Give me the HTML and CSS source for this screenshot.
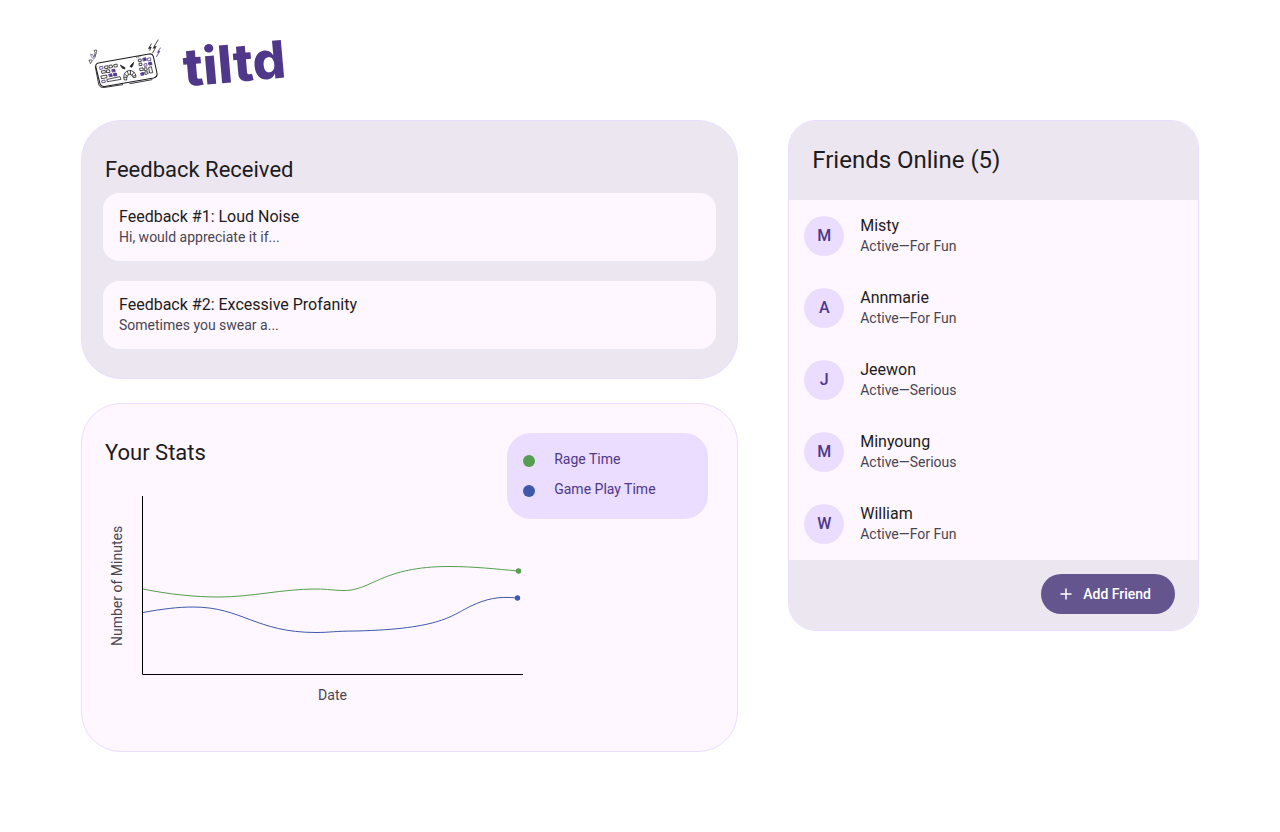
FILE: index.html
```html
<!DOCTYPE html>
<html lang="en">
<head>
<meta charset="utf-8">
<meta name="viewport" content="width=device-width, initial-scale=1">
<title>tiltd</title>
<link rel="stylesheet" href="styles.css">
</head>
<body>
<header class="site-header">
  <svg class="logo" viewBox="3 0 270 180" aria-hidden="true" fill="none" stroke="#1d1b20" stroke-width="2.4" stroke-linejoin="round" stroke-linecap="round">
    <path stroke-width="3.2" d="M55 87 L207 60 Q217 58 220 67 L231 117 Q233 129 221 132 L78 157 Q64 160 60 149 L48 101 Q45 89 55 87Z"/>
    <path stroke-width="2.6" d="M46 98 L56 151 Q60 163 75 160 L128 152 M150 149 L216 137"/>
    <path stroke-width="2" d="M28 78 l8 0 1 2 -5 8z M43 49 l6 -1 1 4 -5 18 -2 -2 2-12z"/>
    <path stroke="#4f378a" stroke-width="2" d="M33 61 l5 1 5 12 -2 2 -6-7z"/>
    <path fill="#1d1b20" stroke-width="1.4" d="M234 18 L222 38 L229 37 L217 58 L226 42 L220 43Z M214 30 l-9 14 6-1 -2 7 5-11 -5 1z"/>
    <path stroke="#4f378a" fill="#4f378a" stroke-width="1.4" d="M241 42 l-9 14 5-1 -8 14 11-18 -5 1z"/>
    <path d="M74 97l9-2 1 8-8 1z M88 94l8-1 2 7-9 2z M102 92l9-2 1 8-8 1z M65 111l10-2 2 7-10 2z M80 108l8-1 2 8-9 1z M64 126l16-3 1 8-15 3z M82 136l38-8 3 8-40 7z M176 76l7-1 1 7-7 1z M178 88l7-1 1 7-7 1z M180 103l8-2 2 8-9 1z M193 102l7-1 2 7-7 2z M195 114l8-1 1 6-7 2z M207 100l7-2 4 18-8 1z"/>
    <path stroke-dasharray="1 4" d="M170 70l10-2"/>
    <g stroke="#4f378a" fill="#4f378a">
      <path fill="none" d="M60 98l8-1 1 7-8 2z M66 140l9-2 1 7-9 1z M203 73l8-2 2 8-8 2z M193 90l7-2 1 8-7 1z"/>
      <path d="M96 107l8-2 2 7-8 2z M87 121l8-2 2 8-8 1z M101 118l8-1 2 8-9 1z M189 73l8-2 2 8-8 2z M206 86l8-2 2 8-8 1z M183 117l8-2 1 8-8 1z"/>
    </g>
    <path fill="#1d1b20" d="M122 94 l13 7 -1 4 -6-2z M160 86 l-10 11 5 3 3-5z"/>
    <path d="M132 136 Q129 118 140 112 Q155 105 165 118 Q169 125 167 130 L160 131 Q157 120 149 121 Q139 123 140 137Z M135 121l6 5 M142 112l3 9 M152 110l-1 11 M162 115l-6 8 M166 124l-7 3 M132 130l8 0"/>
  </svg>
  <h1 class="wordmark">tiltd</h1>
</header>

<main class="dashboard">
  <div class="column">
    <section class="card feedback" aria-labelledby="feedback-title">
      <h2 class="card-title" id="feedback-title">Feedback Received</h2>
      <ul class="feedback-list">
        <li class="feedback-item">
          <h3 class="item-title">Feedback #1: Loud Noise</h3>
          <p class="item-text">Hi, would appreciate it if...</p>
        </li>
        <li class="feedback-item">
          <h3 class="item-title">Feedback #2: Excessive Profanity</h3>
          <p class="item-text">Sometimes you swear a...</p>
        </li>
      </ul>
    </section>

    <section class="card stats" aria-labelledby="stats-title">
      <h2 class="card-title" id="stats-title">Your Stats</h2>
      <ul class="legend">
        <li class="legend-row"><span class="dot dot-rage"></span>Rage Time</li>
        <li class="legend-row"><span class="dot dot-play"></span>Game Play Time</li>
      </ul>
      <figure class="chart">
        <span class="axis-y">Number of Minutes</span>
        <svg class="plot" viewBox="0 0 381 179" role="img" aria-label="Rage time and game play time by date" fill="none">
          <path stroke="#000" d="M.5 0V178.500H381"/>
          <path stroke="#559e4f" d="M1 93 C28 98.500 53 101 77 101 C110 101 140 93 174 93 C186 93 192 94.500 202 94.500 C230 94.500 240 70.500 307 70.500 C332 70.500 354 73 376 75"/>
          <path stroke="#3f58aa" d="M1 116.500 C20 113 36 111 51 111 C100 111 114 136.500 174 136.500 C188 136.500 193 135 214 135 C300 133 310 119 329 110 C344 103 356 100 375 102"/>
          <circle cx="376.500" cy="75" r="2.700" fill="#559e4f"/>
          <circle cx="375.500" cy="102" r="2.700" fill="#3f58aa"/>
        </svg>
        <figcaption class="axis-x">Date</figcaption>
      </figure>
    </section>
  </div>

  <section class="friends" aria-labelledby="friends-title">
    <h2 class="friends-title" id="friends-title">Friends Online (5)</h2>
    <ul class="friend-list">
      <li class="friend"><span class="avatar" aria-hidden="true">M</span><div><h3 class="item-title">Misty</h3><p class="item-text">Active—For Fun</p></div></li>
      <li class="friend"><span class="avatar" aria-hidden="true">A</span><div><h3 class="item-title">Annmarie</h3><p class="item-text">Active—For Fun</p></div></li>
      <li class="friend"><span class="avatar" aria-hidden="true">J</span><div><h3 class="item-title">Jeewon</h3><p class="item-text">Active—Serious</p></div></li>
      <li class="friend"><span class="avatar" aria-hidden="true">M</span><div><h3 class="item-title">Minyoung</h3><p class="item-text">Active—Serious</p></div></li>
      <li class="friend"><span class="avatar" aria-hidden="true">W</span><div><h3 class="item-title">William</h3><p class="item-text">Active—For Fun</p></div></li>
    </ul>
    <div class="friends-footer">
      <button class="add-button" type="button">
        <svg class="add-icon" viewBox="0 0 18 18" aria-hidden="true"><path d="M9 3.500V14.500M3.500 9H14.500" stroke="currentColor" stroke-width="1.500"/></svg>
        Add Friend
      </button>
    </div>
  </section>
</main>
</body>
</html>
```
FILE: styles.css
```css
:root {
  --ink: #1d1b20;
  --ink-soft: #49454f;
  --surface: #fef7ff;
  --surface-high: #ece6f0;
  --lilac: #eaddff;
  --purple: #4f378a;
  --button: #65558f;
}

* {
  box-sizing: border-box;
}

body {
  margin: 0;
  padding: 34px 81px 80px;
  background: #fff;
  color: var(--ink);
  font-family: Roboto, "Liberation Sans", sans-serif;
}

h1, h2, h3, p, ul, figure {
  margin: 0;
  padding: 0;
  font-weight: 400;
}

ul {
  list-style: none;
}

.site-header {
  display: flex;
  align-items: center;
  gap: 12px;
  margin-bottom: 26px;
}

.logo {
  width: 90px;
  height: 60px;
}

.wordmark {
  color: var(--purple);
  font: 800 52px/60px Inter, sans-serif;
  transform: rotate(-5deg);
}

.dashboard {
  display: grid;
  grid-template-columns: 1.6fr 1fr;
  gap: 50px;
  align-items: start;
}

.column {
  display: grid;
  gap: 24px;
}

.card {
  border: 1px solid var(--lilac);
  border-radius: 40px;
}

.card-title {
  font-size: 22px;
  line-height: 28px;
}

.feedback {
  padding: 35px 21px 29px;
  background: var(--surface-high);
}

.feedback .card-title {
  padding: 0 2px;
}

.feedback-list {
  display: grid;
  gap: 20px;
  margin-top: 9px;
}

.feedback-item {
  padding: 14px 16px;
  border-radius: 16px;
  background: var(--surface);
}

.item-title {
  font-size: 16px;
  line-height: 20px;
}

.item-text {
  color: var(--ink-soft);
  font-size: 14px;
  line-height: 20px;
}

.stats {
  display: grid;
  grid-template-columns: 1fr auto;
  grid-template-rows: 63px auto;
  padding: 29px 29px 46px 23px;
  background: var(--surface);
}

.stats .card-title {
  padding-top: 6px;
}

.legend {
  grid-area: 1 / 2 / 3 / 3;
  align-self: start;
  display: grid;
  gap: 10px;
  width: 201px;
  padding: 16px 16px 20px;
  border-radius: 24px;
  background: var(--lilac);
  color: var(--purple);
  font-size: 14px;
  line-height: 20px;
}

.legend-row {
  display: flex;
  align-items: center;
  gap: 19px;
}

.dot {
  width: 12px;
  height: 12px;
  margin-top: 4px;
  border-radius: 50%;
}

.dot-rage {
  background: #559e4f;
}

.dot-play {
  background: #3f58aa;
}

.chart {
  grid-area: 2 / 1 / 3 / 3;
  display: grid;
  grid-template-columns: 20px minmax(0, 381px);
  gap: 10px 15px;
  padding-left: 2px;
  color: var(--ink-soft);
  font-size: 14px;
  line-height: 20px;
}

.axis-y {
  writing-mode: vertical-rl;
  transform: rotate(180deg);
  text-align: center;
}

.plot {
  width: 100%;
}

.axis-x {
  grid-column: 2;
  text-align: center;
}

.friends {
  overflow: hidden;
  border: 1px solid var(--lilac);
  border-radius: 28px;
  background: var(--surface);
}

.friends-title {
  padding: 23px 23px 24px;
  background: var(--surface-high);
  font-size: 24px;
  line-height: 32px;
}

.friend {
  display: flex;
  align-items: center;
  gap: 16px;
  padding: 16px 15px;
}

.avatar {
  width: 40px;
  height: 40px;
  border-radius: 50%;
  background: var(--lilac);
  color: var(--purple);
  font-size: 16px;
  font-weight: 500;
  line-height: 40px;
  text-align: center;
}

.friends-footer {
  display: flex;
  justify-content: flex-end;
  padding: 14px 23px 16px;
  background: var(--surface-high);
}

.add-button {
  display: flex;
  align-items: center;
  gap: 8px;
  padding: 10px 24px 10px 16px;
  border: 0;
  border-radius: 20px;
  background: var(--button);
  color: #fff;
  font: 500 14px/20px Roboto, "Liberation Sans", sans-serif;
}

.add-icon {
  width: 18px;
  height: 18px;
}
```
